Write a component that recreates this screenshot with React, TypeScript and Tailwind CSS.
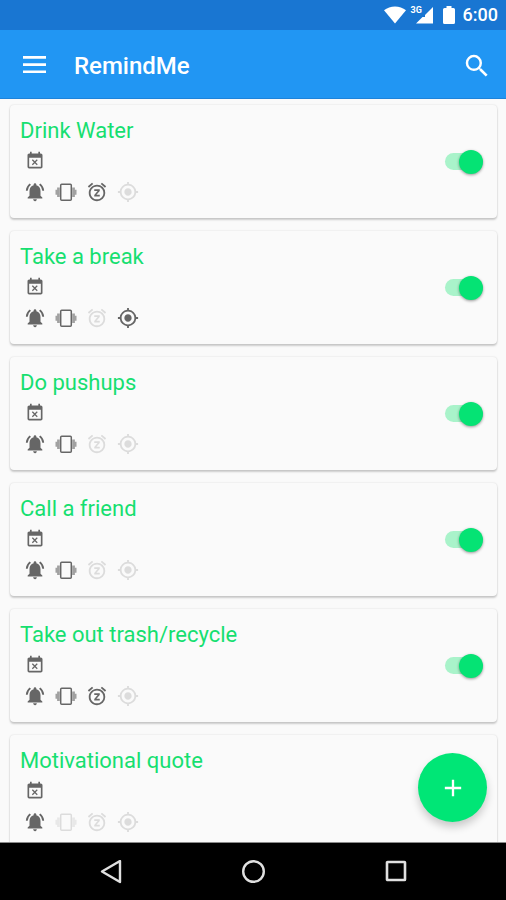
import { useState } from 'react';
import type { SVGProps } from 'react';
import { MdAdd, MdEventBusy, MdGpsFixed, MdNotificationsActive, MdSearch, MdSnooze } from 'react-icons/md';

type Option = 'sound' | 'vibrate' | 'snooze' | 'location';

interface Reminder {
  title: string;
  options: Option[];
}

const REMINDERS: Reminder[] = [
  { title: 'Drink Water', options: ['sound', 'vibrate', 'snooze'] },
  { title: 'Take a break', options: ['sound', 'vibrate', 'location'] },
  { title: 'Do pushups', options: ['sound', 'vibrate'] },
  { title: 'Call a friend', options: ['sound', 'vibrate'] },
  { title: 'Take out trash/recycle', options: ['sound', 'vibrate', 'snooze'] },
  { title: 'Motivational quote', options: ['sound'] },
];

// Phone outline with stepped solid waves on both sides.
function VibrateIcon(props: SVGProps<SVGSVGElement>) {
  return (
    <svg viewBox="0 0 22 22" className="size-[22px]" fill="currentColor" aria-hidden="true" {...props}>
      <rect x="5.700" y="3.200" width="10.600" height="16" rx="1" fill="none" stroke="currentColor" strokeWidth="1.500" />
      <path opacity="0.6" d="M.5 8.700h1.600V6.500h2.700v9.400H2.100v-2.200H.5zM21.500 8.700h-1.600V6.500h-2.700v9.400h2.700v-2.200h1.600z" />
    </svg>
  );
}

const OPTION_ICONS = [
  { option: 'sound', Icon: MdNotificationsActive },
  { option: 'vibrate', Icon: VibrateIcon },
  { option: 'snooze', Icon: MdSnooze },
  { option: 'location', Icon: MdGpsFixed },
] as const;

function StatusBar() {
  return (
    <div className="flex h-[30px] shrink-0 items-center justify-end bg-[#1976d2] pr-2 text-white">
      <svg viewBox="0 0 24 20" className="h-5 w-6" fill="currentColor" aria-hidden="true">
        <path d="M12 18.500 1 5.200C4 2.800 8 1.400 12 1.400S20 2.800 23 5.200z" />
      </svg>
      <div className="relative ml-1 h-5 w-6">
        <svg viewBox="0 0 24 20" className="h-5 w-6" fill="currentColor" aria-hidden="true">
          <path d="M22 2v16.500H5l6.500-6.500H14V10z" />
        </svg>
        <span className="absolute top-0 left-0 text-[9px] leading-[10px] font-bold">3G</span>
      </div>
      <svg viewBox="0 0 12 20" className="ml-2 h-5 w-3" fill="currentColor" aria-hidden="true">
        <path d="M3.500 1h5v2h2q1.500 0 1.500 1.500v13q0 1.500-1.500 1.500h-9Q0 19 0 17.500v-13Q0 3 1.500 3h2z" />
      </svg>
      <span className="ml-2 text-[18px] leading-6 font-medium">6:00</span>
    </div>
  );
}

function ReminderCard({ title, options }: Reminder) {
  const [enabled, setEnabled] = useState(true);

  return (
    <li className="flex h-[113px] shrink-0 items-center justify-between rounded-[4px] bg-[#fafafa] pr-[14px] pl-[10px] shadow-[0_2px_2px_rgba(0,0,0,0.18),0_0_2px_rgba(0,0,0,0.14)]">
      <div className="flex flex-col">
        <h2 className="text-[22px] leading-7 text-[#16df70]">{title}</h2>
        <div className="flex h-8 items-center pl-[5px] text-[#666666]">
          <MdEventBusy size={20} />
        </div>
        <div className="flex h-[30px] items-center gap-[9px] pl-1">
          {OPTION_ICONS.map(({ option, Icon }) => (
            <span
              key={option}
              className={`text-[22px] ${options.includes(option) ? 'text-[#666666]' : 'text-[#dcdcdc]'}`}
            >
              <Icon />
            </span>
          ))}
        </div>
      </div>
      <label className="flex h-8 w-[38px] cursor-pointer items-center">
        <input
          type="checkbox"
          aria-label={title}
          checked={enabled}
          onChange={(e) => setEnabled(e.target.checked)}
          className="peer sr-only"
        />
        <span className="flex h-[17px] w-full items-center justify-start rounded-full bg-[#c4c4c4] peer-checked:justify-end peer-checked:bg-[#a9f3ca]">
          <span
            className={`size-6 rounded-full shadow-[0_1px_3px_rgba(0,0,0,0.4)] ${enabled ? 'bg-[#05e374]' : 'bg-[#f1f1f1]'}`}
          />
        </span>
      </label>
    </li>
  );
}

function NavBar() {
  return (
    <nav className="flex h-[58px] shrink-0 items-center justify-center gap-[118px] border-t border-[#8a8a8a] bg-black text-[#e0e0e0]">
      <button type="button" aria-label="Back">
        <svg viewBox="0 0 24 24" className="size-6" fill="none" stroke="currentColor" strokeWidth="2.400">
          <path d="M21 1v21L3 11.500z" strokeLinejoin="round" />
        </svg>
      </button>
      <button type="button" aria-label="Home">
        <svg viewBox="0 0 24 24" className="size-6" fill="none" stroke="currentColor" strokeWidth="2.400">
          <circle cx="12.500" cy="11.500" r="10.300" />
        </svg>
      </button>
      <button type="button" aria-label="Recent apps">
        <svg viewBox="0 0 24 24" className="size-6" fill="none" stroke="currentColor" strokeWidth="2.600">
          <rect x="4" y="2" width="18" height="18" rx="0.600" />
        </svg>
      </button>
    </nav>
  );
}

export default function App() {
  return (
    <div className="flex h-screen flex-col bg-[#fafafa] font-[Roboto,sans-serif]">
      <StatusBar />
      <header className="flex h-[69px] shrink-0 items-center border-b border-[#1e83da] bg-[#2196f3] px-[14px] pt-[3px] text-white">
        <button type="button" aria-label="Open menu" className="ml-[6px]">
          <svg viewBox="0 0 30 24" className="h-6 w-[30px]" fill="currentColor" aria-hidden="true">
            <path d="M3 2h23v2.700H3zM3 9.200h23v2.700H3zM3 16.400h23v2.700H3z" />
          </svg>
        </button>
        <h1 className="ml-6 grow text-2xl font-medium">RemindMe</h1>
        <button type="button" aria-label="Search">
          <MdSearch size={30} />
        </button>
      </header>

      {/* Reminder list, with the add button floating over it */}
      <main className="relative min-h-0 grow overflow-hidden">
        <ul className="flex h-full flex-col gap-[13px] overflow-hidden pt-[6px] pr-[9px] pl-[10px]">
          {REMINDERS.map((r) => (
            <ReminderCard key={r.title} {...r} />
          ))}
        </ul>
        <button
          type="button"
          aria-label="Add reminder"
          className="absolute right-[19px] bottom-5 flex size-[69px] items-center justify-center rounded-full bg-[#00e676] text-white shadow-[0_5px_9px_rgba(0,0,0,0.2)]"
        >
          <MdAdd size={28} />
        </button>
      </main>
      <NavBar />
    </div>
  );
}
